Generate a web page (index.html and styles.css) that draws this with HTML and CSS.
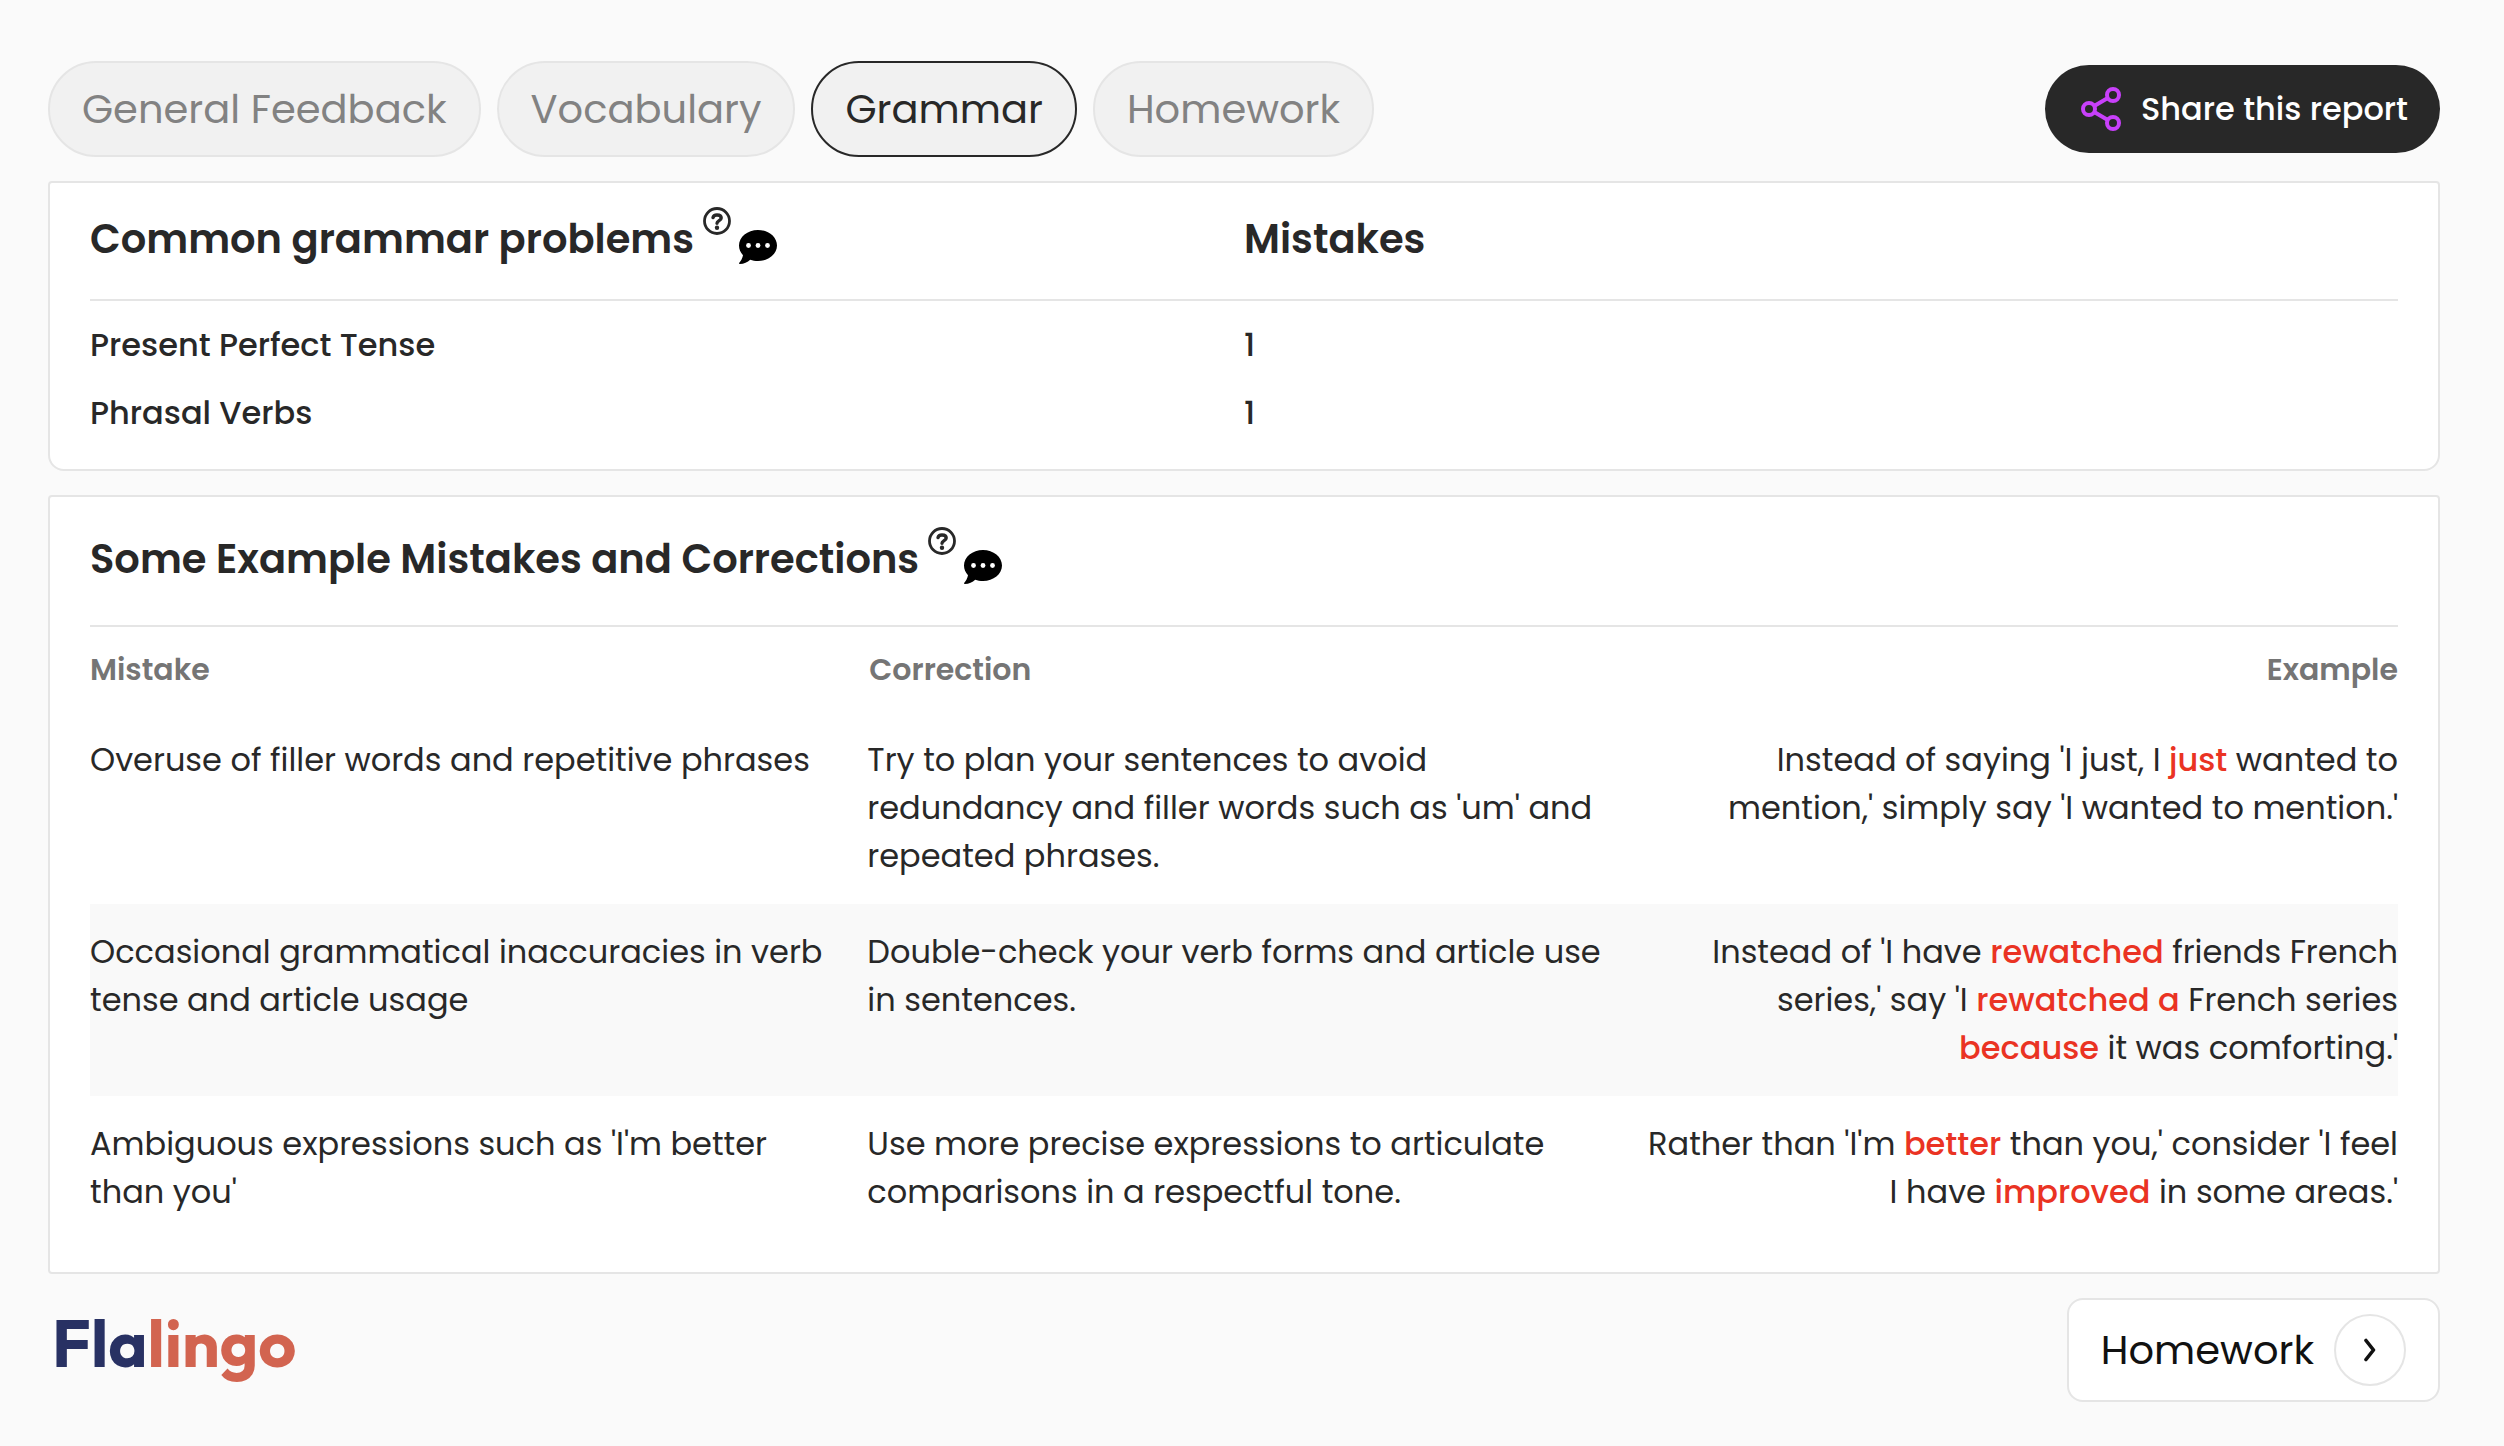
FILE: index.html
```html
<!DOCTYPE html>
<html lang="en">
<head>
<meta charset="utf-8">
<meta name="viewport" content="width=device-width, initial-scale=1">
<title>Flalingo report – Grammar</title>
<link rel="stylesheet" href="styles.css">
</head>
<body>
<svg class="sprite" aria-hidden="true">
  <symbol id="icon-help" viewBox="0 0 28 28">
    <circle cx="14" cy="14" r="12.500" fill="none" stroke="currentColor" stroke-width="2.800"/>
    <path d="M10 10.600c.4-1.800 2-2.600 4-2.600 2.500 0 4.200 1.200 4.200 3 0 2.600-4.200 2.600-4.200 5.200" fill="none" stroke="currentColor" stroke-width="3.400" stroke-linecap="round"/>
    <circle cx="14" cy="20.800" r="2.200" fill="currentColor"/>
  </symbol>
  <symbol id="icon-comment" viewBox="0 0 38 34">
    <path d="M19 0C29.500 0 38 7 38 15.500S29.500 31 19 31c-2.800 0-5.400-.5-7.800-1.300C8.500 32.200 5 34 .8 34c-.8 0-1-.8-.5-1.300C1.800 31 3.600 28 4 25.200 1.500 22.500 0 19.200 0 15.500 0 7 8.500 0 19 0z" fill="currentColor"/>
    <g fill="#fff"><circle cx="9.500" cy="15.500" r="2.400"/><circle cx="19" cy="15.500" r="2.400"/><circle cx="28.500" cy="15.500" r="2.400"/></g>
  </symbol>
</svg>
<div class="page">
  <header class="topbar">
    <nav class="tabs" aria-label="Report sections">
      <button class="tab" type="button">General Feedback</button>
      <button class="tab" type="button">Vocabulary</button>
      <button class="tab tab-active" type="button" aria-current="page">Grammar</button>
      <button class="tab" type="button">Homework</button>
    </nav>
    <button class="share" type="button">
      <svg class="share-icon" viewBox="0 0 40 44" fill="none" stroke="currentColor" stroke-width="4" aria-hidden="true">
        <circle cx="8" cy="22" r="6"/><circle cx="32" cy="8" r="6"/><circle cx="32" cy="36" r="6"/>
        <path d="M13.200 19 26.800 11M13.200 25l13.600 8"/>
      </svg>
      Share this report
    </button>
  </header>

  <main class="content">
    <section class="card card-problems">
      <table class="problems">
        <thead>
          <tr>
            <th class="title" scope="col">
              <span class="title-row">Common grammar problems
                <svg class="icon-help" aria-hidden="true"><use href="#icon-help"/></svg>
                <svg class="icon-comment" aria-hidden="true"><use href="#icon-comment"/></svg>
              </span>
            </th>
            <th class="title" scope="col">Mistakes</th>
          </tr>
        </thead>
        <tbody>
          <tr><td>Present Perfect Tense</td><td>1</td></tr>
          <tr><td>Phrasal Verbs</td><td>1</td></tr>
        </tbody>
      </table>
    </section>

    <section class="card card-examples">
      <h2 class="title title-row title-examples">Some Example Mistakes and Corrections
        <svg class="icon-help" aria-hidden="true"><use href="#icon-help"/></svg>
        <svg class="icon-comment" aria-hidden="true"><use href="#icon-comment"/></svg>
      </h2>
      <table class="examples">
        <thead>
          <tr><th scope="col">Mistake</th><th scope="col">Correction</th><th scope="col">Example</th></tr>
        </thead>
        <tbody>
          <tr>
            <td>Overuse of filler words and repetitive phrases</td>
            <td>Try to plan your sentences to avoid redundancy and filler words such as 'um' and repeated phrases.</td>
            <td>Instead of saying 'I just, I <strong>just</strong> wanted to mention,' simply say 'I wanted to mention.'</td>
          </tr>
          <tr>
            <td>Occasional grammatical inaccuracies in verb tense and article usage</td>
            <td>Double-check your verb forms and article use in sentences.</td>
            <td>Instead of 'I have <strong>rewatched</strong> friends French series,' say 'I <strong>rewatched a</strong> French series <strong>because</strong> it was comforting.'</td>
          </tr>
          <tr>
            <td>Ambiguous expressions such as 'I'm better than you'</td>
            <td>Use more precise expressions to articulate comparisons in a respectful tone.</td>
            <td>Rather than 'I'm <strong>better</strong> than you,' consider 'I feel I have <strong>improved</strong> in some areas.'</td>
          </tr>
        </tbody>
      </table>
    </section>
  </main>

  <footer class="footer">
    <div class="logo">Fla<span class="logo-accent">lingo</span></div>
    <button class="next" type="button">
      Homework
      <span class="next-circle">
        <svg class="next-icon" viewBox="0 0 12 24" fill="none" stroke="currentColor" stroke-width="3.600" stroke-linecap="round" stroke-linejoin="round" aria-hidden="true"><path d="M2 2.500 9.500 12 2 21.500"/></svg>
      </span>
    </button>
  </footer>
</div>
</body>
</html>
```
FILE: styles.css
```css
* {
  box-sizing: border-box;
}

body {
  margin: 0;
  background: #fafafa;
  color: #282828;
  font-family: Poppins, Inter, sans-serif;
  font-size: 32px;
  line-height: 48px;
}

button {
  font: inherit;
  cursor: pointer;
}

.sprite {
  display: none;
}

.page {
  padding: 61px 64px 44px 48px;
}

.topbar,
.footer {
  display: flex;
  align-items: center;
  justify-content: space-between;
}

.tabs {
  display: flex;
  gap: 16px;
}

.tab {
  padding: 16px 32px;
  border: 2px solid #e5e5e5;
  border-radius: 48px;
  background: #f1f1f1;
  color: #828282;
  font-size: 40px;
  line-height: 60px;
}

.tab-active {
  border-color: #282828;
  color: #282828;
}

.share {
  display: flex;
  align-items: center;
  gap: 20px;
  padding: 20px 32px 20px 36px;
  border: 0;
  border-radius: 44px;
  background: #282828;
  color: #fff;
  font-weight: 500;
}

.share-icon {
  width: 40px;
  height: 44px;
  color: #c840fa;
}

.content {
  display: grid;
  gap: 24px;
  margin: 24px 0;
}

.card {
  padding: 0 40px 32px;
  border: 2px solid #e5e5e5;
  border-radius: 4px;
  background: #fff;
}

.card-problems {
  padding-bottom: 22px;
  border-radius: 4px 4px 16px 16px;
}

.title {
  margin: 0;
  padding: 26px 0 30px;
  border-bottom: 2px solid #e5e5e5;
  font-size: 40px;
  font-weight: 600;
  line-height: 60px;
  text-align: left;
}

.title-row {
  display: flex;
  align-items: flex-start;
}

.title-examples {
  padding: 32px 0 36px;
}

.icon-help {
  width: 28px;
  height: 28px;
  margin: -2px 8px 0 9px;
}

.icon-comment {
  width: 38px;
  height: 34px;
  margin-top: 21px;
  color: #000;
}

.problems {
  width: 100%;
  border-spacing: 0;
  table-layout: fixed;
  font-weight: 500;
}

.problems td {
  padding: 10px 0;
}

.problems tbody tr:first-child td {
  padding-top: 20px;
}

.examples,
.examples thead,
.examples tbody {
  display: block;
}

.examples tr {
  display: grid;
  grid-template-columns: repeat(3, 1fr);
  gap: 24px;
}

.examples th {
  padding: 19px 0 18px;
  color: #757575;
  font-size: 30px;
  font-weight: 600;
  text-align: left;
}

.examples th:nth-child(2) {
  padding-left: 2px;
}

.examples td {
  padding: 24px 0;
}

.examples tr > :last-child {
  text-align: right;
}

.examples tbody tr:nth-child(even) {
  background: #f9f9f9;
}

.examples strong {
  color: #ea3323;
  font-weight: 500;
}

.logo {
  padding: 0 0 14px 4px;
  color: #283163;
  font-family: Outfit, Poppins, sans-serif;
  font-size: 66px;
  font-weight: 700;
  line-height: 88px;
}

.logo-accent {
  color: #d26450;
}

.next {
  display: flex;
  align-items: center;
  gap: 20px;
  padding: 14px 32px;
  border: 2px solid #e5e5e5;
  border-radius: 16px;
  background: #fff;
  color: #111;
  font-size: 40px;
  line-height: 60px;
}

.next-circle {
  display: grid;
  place-items: center;
  width: 72px;
  height: 72px;
  border: 2px solid #e5e5e5;
  border-radius: 50%;
}

.next-icon {
  width: 12px;
  height: 24px;
}
```
